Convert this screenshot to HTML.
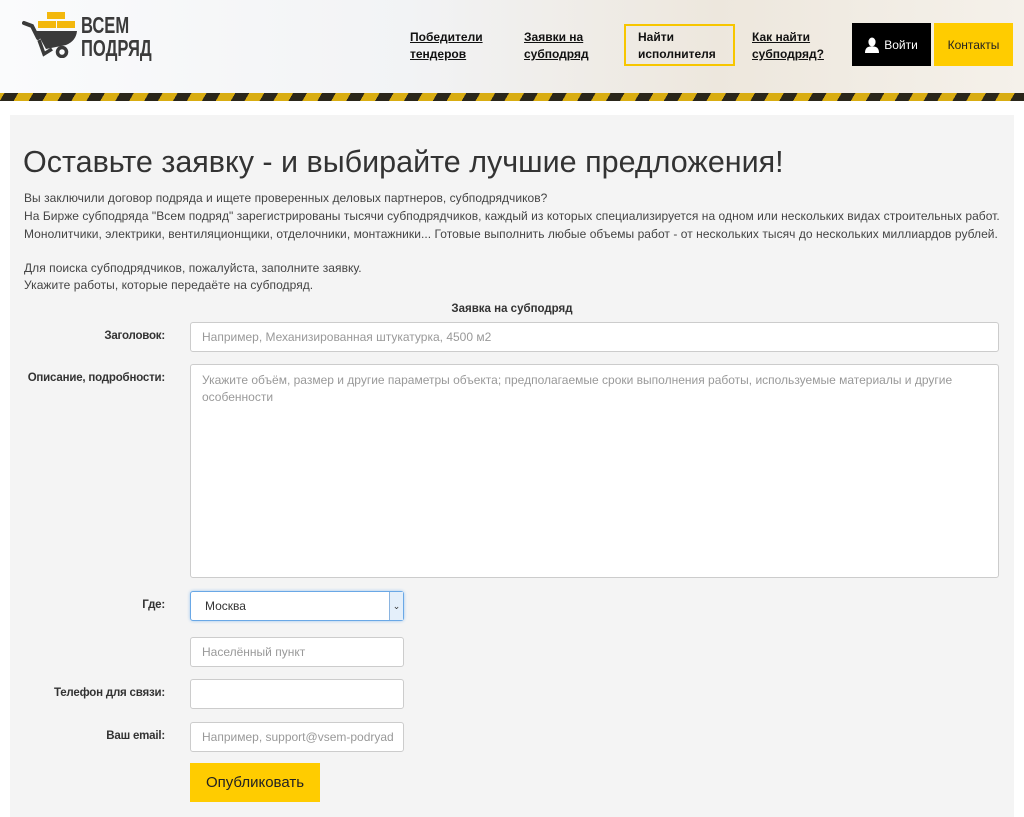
<!DOCTYPE html>
<html><head><meta charset="utf-8"><style>
*{box-sizing:border-box;margin:0;padding:0}
body{width:1024px;height:817px;overflow:hidden;background:#fff;font-family:"Liberation Sans","DejaVu Sans",sans-serif;color:#333;position:relative}
.hdr{position:absolute;left:0;top:0;width:1024px;height:93px;background:linear-gradient(90deg,#fafbfc 0%,#f2f3f5 40%,#ede7dd 70%,#f5f1ea 100%)}
.stripe{position:absolute;left:0;top:93px;width:1024px;height:8px;background:repeating-linear-gradient(-60deg,#2a261a 0 12px,#d9ad12 12px 25px)}
.a{position:absolute;font-size:12px;font-weight:bold;line-height:17px;color:#111}
.u{text-decoration:underline}
.panel{position:absolute;left:10px;top:115px;width:1004px;height:702px;background:#f4f4f4}
.t{position:absolute;font-size:12px;line-height:18px;color:#444;left:24px;letter-spacing:.05px}
.lbl{position:absolute;right:859px;font-size:11.5px;font-weight:bold;color:#333;text-align:right;white-space:nowrap;letter-spacing:-.2px}
.in{position:absolute;background:#fff;border:1px solid #ccc;border-radius:3px;font-size:12px;color:#999;padding-left:11px;display:flex;align-items:center}
</style></head><body>
<div class="hdr"></div>
<div class="stripe"></div>
<svg style="position:absolute;left:22px;top:12px" width="56" height="46" viewBox="0 0 56 46">
<rect x="25" y="0" width="18" height="7" fill="#f3b80d"/><rect x="16" y="9" width="18" height="7" fill="#f3b80d"/><rect x="35" y="9" width="18" height="7" fill="#f3b80d"/>
<path d="M2 11 L10 14 L16 26" fill="none" stroke="#3a3a3a" stroke-width="4" stroke-linecap="round"/>
<path d="M14 19 L55 19 Q54 29 44 33 L24 37 Z" fill="#3a3a3a"/>
<path d="M17 28 L22 42 L30 37" fill="none" stroke="#3a3a3a" stroke-width="3.5"/>
<circle cx="40" cy="40" r="4.5" fill="none" stroke="#3a3a3a" stroke-width="3.5"/>
</svg>
<div style="position:absolute;left:81px;top:14px;font-size:23px;font-weight:bold;line-height:23px;color:#3b3b3b;transform:scaleX(.72);transform-origin:left">ВСЕМ<br>ПОДРЯД</div>
<div class="a u" style="left:410px;top:29px">Победители<br>тендеров</div>
<div class="a u" style="left:524px;top:29px">Заявки на<br>субподряд</div>
<div style="position:absolute;left:624px;top:24px;width:111px;height:42px;border:2px solid #f7c600"></div>
<div class="a" style="left:638px;top:29px">Найти<br>исполнителя</div>
<div class="a u" style="left:752px;top:29px">Как найти<br>субподряд?</div>
<div style="position:absolute;left:852px;top:23px;width:79px;height:43px;background:#000;color:#fff;font-size:12px;display:flex;align-items:center;justify-content:center">
<svg width="14" height="16" viewBox="0 0 14 16" style="margin-right:5px"><ellipse cx="7" cy="5" rx="3.6" ry="4.5" fill="#fff"/><path d="M0 16 Q0 10 5 9.5 L9 9.5 Q14 10 14 16Z" fill="#fff"/></svg>Войти</div>
<div style="position:absolute;left:934px;top:23px;width:79px;height:43px;background:#fc0;color:#222;font-size:12px;display:flex;align-items:center;justify-content:center">Контакты</div>

<div class="panel"></div>
<div style="position:absolute;left:23px;top:145px;font-size:30.5px;color:#333;white-space:nowrap">Оставьте заявку - и выбирайте лучшие предложения!</div>
<div class="t" style="top:189px">Вы заключили договор подряда и ищете проверенных деловых партнеров, субподрядчиков?</div>
<div class="t" style="top:207px">На Бирже субподряда "Всем подряд" зарегистрированы тысячи субподрядчиков, каждый из которых специализируется на одном или нескольких видах строительных работ.</div>
<div class="t" style="top:225px">Монолитчики, электрики, вентиляционщики, отделочники, монтажники... Готовые выполнить любые объемы работ - от нескольких тысяч до нескольких миллиардов рублей.</div>
<div class="t" style="top:259px">Для поиска субподрядчиков, пожалуйста, заполните заявку.</div>
<div class="t" style="top:276px">Укажите работы, которые передаёте на субподряд.</div>
<div style="position:absolute;left:0;width:1024px;top:303px;text-align:center;font-size:11.5px;font-weight:bold;color:#333">Заявка на субподряд</div>

<div class="lbl" style="top:330px">Заголовок:</div>
<div class="in" style="left:190px;top:322px;width:809px;height:30px">Например, Механизированная штукатурка, 4500 м2</div>
<div class="lbl" style="top:372px">Описание, подробности:</div>
<div class="in" style="left:190px;top:364px;width:809px;height:214px;align-items:flex-start;padding-top:7px;line-height:17px;padding-right:40px">Укажите объём, размер и другие параметры объекта; предполагаемые сроки выполнения работы, используемые материалы и другие особенности</div>
<div class="lbl" style="top:599px">Где:</div>
<div class="in" style="left:190px;top:591px;width:214px;height:30px;border-color:#6aa8e6;box-shadow:0 0 3px #9cc6ef;color:#333;padding-left:14px">Москва
<div style="position:absolute;right:0;top:0;width:14px;height:28px;background:#e4effa;border-left:1px solid #8ab4e0;font-size:9px;color:#333;display:flex;align-items:center;justify-content:center">⌄</div></div>
<div class="in" style="left:190px;top:637px;width:214px;height:30px">Населённый пункт</div>
<div class="lbl" style="top:687px">Телефон для связи:</div>
<div class="in" style="left:190px;top:679px;width:214px;height:30px"></div>
<div class="lbl" style="top:730px">Ваш email:</div>
<div class="in" style="left:190px;top:722px;width:214px;height:30px;white-space:nowrap;overflow:hidden">Например, support@vsem-podryad</div>
<div style="position:absolute;left:190px;top:763px;width:130px;height:39px;background:#fc0;color:#222;font-size:15px;display:flex;align-items:center;justify-content:center">Опубликовать</div>
</body></html>
